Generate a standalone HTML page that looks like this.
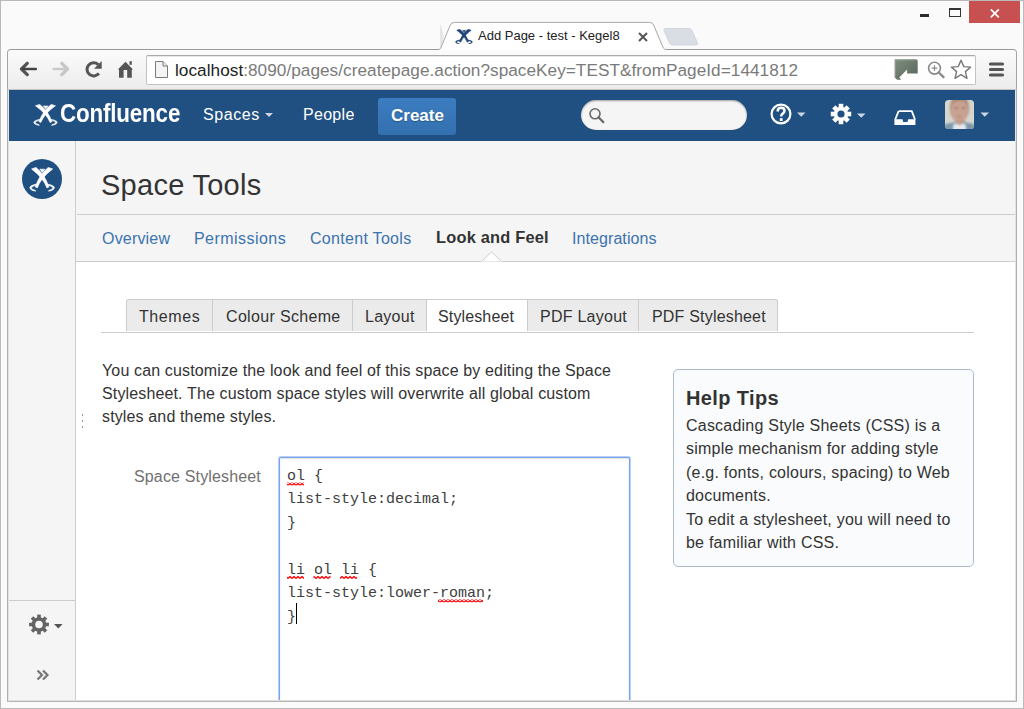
<!DOCTYPE html>
<html><head><meta charset="utf-8">
<style>
*{margin:0;padding:0;box-sizing:border-box}
html,body{width:1024px;height:709px;overflow:hidden;background:#fafafa;font-family:"Liberation Sans",sans-serif;position:relative}
.a{position:absolute}
.t{position:absolute;white-space:nowrap;line-height:1}
#frame{left:0;top:0;width:1024px;height:709px;border:1px solid #bababa;background:#fafafa}
#toolbar{left:7px;top:49px;width:1010px;height:41px;border:1px solid #a5a5a5;border-top-color:#999;border-bottom:none;border-radius:4px 4px 0 0;background:linear-gradient(#fbfbfb,#ececec)}
#omni{left:146px;top:55px;width:830px;height:30px;background:#fff;border:1px solid #c2c2c2;border-top-color:#a9a9a9;border-radius:2px;box-shadow:inset 0 1px 0 #e8e8e8}
#content{left:7px;top:89px;width:1010px;height:613px;border:1px solid #b0b0b0;border-top-color:#c4c4c4;border-bottom-color:#b5b5b5;background:#fff;overflow:hidden}
#hdr{left:9px;top:90px;width:1006px;height:51px;background:#205081}
#side{left:9px;top:141px;width:67px;height:560px;background:#f5f5f5;border-right:1px solid #ccc}
#spacehdr{left:76px;top:141px;width:939px;height:121px;background:#f5f5f5;border-bottom:1px solid #ccc}
</style></head><body>
<div id="frame" class="a"></div>
<div id="toolbar" class="a"></div>
<div id="omni" class="a"></div>
<div id="content" class="a"></div>
<div id="hdr" class="a"></div>
<div class="a" style="left:8px;top:90px;width:1px;height:611px;background:#e4e4e4"></div>
<div class="a" style="left:1015px;top:90px;width:1px;height:611px;background:#e4e4e4"></div>
<div id="side" class="a"></div>
<div id="spacehdr" class="a"></div>



<!-- window controls -->
<div class="a" style="left:969px;top:1px;width:51px;height:22px;background:#c75050"></div>
<svg class="a" style="left:969px;top:1px" width="51" height="22"><path d="M21.8 8.4 L29.8 16.4 M29.8 8.4 L21.8 16.4" stroke="#fff" stroke-width="1.7"/></svg>
<div class="a" style="left:920px;top:14px;width:9px;height:3px;background:#2b2b2b"></div>
<div class="a" style="left:949px;top:8px;width:12px;height:9px;border:1px solid #333;border-top-width:2px;background:transparent"></div>

<!-- tab -->
<svg class="a" style="left:430px;top:18px" width="280" height="34" viewBox="0 0 280 34">
<defs><linearGradient id="gw" x1="0" y1="0" x2="1" y2="0"><stop offset="0" stop-color="#d2d6dc"/><stop offset="1" stop-color="#eef0f3"/></linearGradient></defs>
<path d="M10.3 7 L11 7 L14 20 L11 29.5 L10.3 29.5 Z" fill="url(#gw)" opacity="0.8"/>
<path d="M8.5 32 L10.8 30 L20.2 7.2 Q21.3 4.4 24.5 4.4 L219.5 4.4 Q222.5 4.4 223.6 7 L233.3 30 L236.5 32 Z" fill="#fff"/>
<path d="M8 31.5 Q10 31.5 10.8 30 L20.2 7.2 Q21.3 4.4 24.5 4.4 L219.5 4.4 Q222.5 4.4 223.6 7 L233.3 30 Q234 31.5 236.5 31.5" fill="none" stroke="#a8a8a8" stroke-width="1"/>
<path d="M234 12.5 Q233.5 10.5 235.5 10.5 L259 10.5 Q261 10.5 262 12.5 L267.5 25 Q268 27 266 27 L242.5 27 Q240.5 27 239.5 25 Z" fill="#d9dde4" stroke="#d2d6dc" stroke-width="1"/>
</svg>
<svg class="a" style="left:455px;top:28.7px" width="18" height="15.6" viewBox="180 200 345 325" preserveAspectRatio="none"><g fill="#1d4475" stroke="#1d4475" stroke-width="6"><path d="M214 226 L272 206 Q390 300 440 462 L416 474 Q370 345 214 226 Z" stroke="#1d4475" stroke-width="12" stroke-linejoin="round"/>
<path d="M490 226 L432 206 Q314 300 264 462 L288 474 Q334 345 490 226 Z" stroke="#1d4475" stroke-width="12" stroke-linejoin="round"/>
<path d="M322 228 L388 228 L355 272 Z"/>
<path d="M300 420 Q180 440 190 478 Q205 510 268 518 L262 504 Q215 495 212 475 Q215 452 300 434 Z"/>
<path d="M404 420 Q524 440 514 478 Q499 510 436 518 L442 504 Q489 495 492 475 Q489 452 404 434 Z"/></g></svg>
<div class="t" style="left:478px;top:29px;font-size:13px;color:#222">Add Page - test - Kegel8</div>
<svg class="a" style="left:638px;top:32px" width="10" height="10"><path d="M1 1 L9 9 M9 1 L1 9" stroke="#555" stroke-width="2"/></svg>

<!-- toolbar icons -->
<svg class="a" style="left:19px;top:61px" width="20" height="18" viewBox="0 0 20 18">
<path d="M8.2 2.3 L2.5 8 L8.2 13.7" stroke="#555" stroke-width="3.3" fill="none" stroke-linecap="round" stroke-linejoin="round"/>
<path d="M4 8 L16.8 8" stroke="#444" stroke-width="2.6" stroke-linecap="round"/>
</svg>
<svg class="a" style="left:51px;top:61px" width="20" height="18" viewBox="0 0 20 18">
<path d="M10.8 2.3 L16.5 8 L10.8 13.7" stroke="#c6c6c6" stroke-width="3.3" fill="none" stroke-linecap="round" stroke-linejoin="round"/>
<path d="M2.7 8 L15 8" stroke="#c9c9c9" stroke-width="2.6" stroke-linecap="round"/>
</svg>
<svg class="a" style="left:84px;top:60px" width="19" height="19" viewBox="0 0 19 19">
<path d="M14.2 4.6 A6.6 6.6 0 1 0 14.9 13.3" stroke="#555" stroke-width="3" fill="none"/>
<path d="M10 8.7 L17.7 8.7 L17.7 1 Z" fill="#555"/>
</svg>
<svg class="a" style="left:117px;top:60px" width="17" height="19" viewBox="0 0 17 19">
<path d="M8.5 1.8 L16 9.5 L14.8 9.5 L14.8 17.8 L10.2 17.8 L10.2 10 L6.6 10 L6.6 17.8 L2 17.8 L2 9.5 L0.8 9.5 Z" fill="#555"/>
<rect x="12.5" y="1.2" width="2.3" height="3.6" fill="#555"/>
</svg>
<svg class="a" style="left:154px;top:60px" width="15" height="19" viewBox="0 0 15 19">
<path d="M1.5 1.5 L9 1.5 L13.5 6 L13.5 17.5 L1.5 17.5 Z" fill="#f4f4f4" stroke="#7a7a7a" stroke-width="1"/>
<path d="M9 1.5 L9 6 L13.5 6" fill="#e8e8e8" stroke="#7a7a7a" stroke-width="1"/>
</svg>
<div class="t" style="left:175px;top:61.7px;font-size:17.2px;letter-spacing:0.04px;color:#7a7a7a"><span style="color:#222">localhost</span>:8090/pages/createpage.action?spaceKey=TEST&amp;fromPageId=1441812</div>
<svg class="a" style="left:894px;top:59px" width="25" height="22" viewBox="0 0 25 22">
<defs><linearGradient id="gg" x1="0" y1="0" x2="1" y2="1"><stop offset="0" stop-color="#7f8e7f"/><stop offset="1" stop-color="#56655a"/></linearGradient></defs>
<path d="M0.7 0.2 L21.7 0.2 Q23.7 0.2 23.7 2.2 L23.7 14.6 L13.1 14.6 L13.1 10.6 L5.3 18.6 L7.3 20.8 L3.2 20.8 L0.7 18.4 Z" fill="url(#gg)"/>
<path d="M1.2 0.8 L21.5 0.8 M1.2 0.8 L1.2 18" stroke="#a3aea3" stroke-width="1.2" opacity="0.6"/>
</svg>
<svg class="a" style="left:927px;top:61px" width="19" height="18" viewBox="0 0 19 18">
<circle cx="7.5" cy="7.2" r="5.9" stroke="#8a8a8a" stroke-width="1.6" fill="#fff"/>
<path d="M11.8 11.5 L16.5 16.2" stroke="#8a8a8a" stroke-width="2.4" stroke-linecap="round"/>
<path d="M7.5 4.3 L7.5 10.1 M4.6 7.2 L10.4 7.2" stroke="#8a8a8a" stroke-width="1.2"/>
</svg>
<svg class="a" style="left:950px;top:59px" width="22" height="21" viewBox="0 0 22 21">
<path d="M11 1.2 L13.8 7.6 L20.6 8.1 L15.4 12.6 L17 19.3 L11 15.7 L5 19.3 L6.6 12.6 L1.4 8.1 L8.2 7.6 Z" fill="#fff" stroke="#777" stroke-width="1.4" stroke-linejoin="round"/>
</svg>
<svg class="a" style="left:988px;top:61px" width="17" height="18" viewBox="0 0 17 18">
<path d="M2.5 3 L14.5 3 M2.5 8.5 L14.5 8.5 M2.5 14 L14.5 14" stroke="#555" stroke-width="3.2" stroke-linecap="round"/>
</svg>

<!-- confluence header -->
<svg class="a" style="left:33px;top:104px" width="25" height="22" viewBox="180 200 345 325" preserveAspectRatio="none"><g fill="#fff" stroke="#fff" stroke-width="7"><path d="M214 226 L272 206 Q390 300 440 462 L416 474 Q370 345 214 226 Z" stroke="#fff" stroke-width="9" stroke-linejoin="round"/>
<path d="M490 226 L432 206 Q314 300 264 462 L288 474 Q334 345 490 226 Z" stroke="#fff" stroke-width="9" stroke-linejoin="round"/>
<path d="M322 228 L388 228 L355 272 Z"/>
<path d="M300 420 Q180 440 190 478 Q205 510 268 518 L262 504 Q215 495 212 475 Q215 452 300 434 Z"/>
<path d="M404 420 Q524 440 514 478 Q499 510 436 518 L442 504 Q489 495 492 475 Q489 452 404 434 Z"/></g></svg>
<div class="t" style="left:60px;top:101px;font-size:25px;font-weight:bold;color:#fff;transform:scaleX(0.896);transform-origin:0 0;letter-spacing:-0.2px">Confluence</div>
<div class="t" style="left:203px;top:107px;font-size:16px;color:#fff;letter-spacing:0.6px">Spaces</div>
<svg class="a" style="left:265px;top:113px" width="9" height="5"><path d="M0 0 L8 0 L4 4 Z" fill="#ccd6e3"/></svg>
<div class="t" style="left:303px;top:107px;font-size:16px;color:#fff;letter-spacing:0.3px">People</div>
<div class="a" style="left:378px;top:98px;width:78px;height:37px;background:linear-gradient(#3b7cc0,#3370af);border-radius:3px"></div>
<div class="t" style="left:391px;top:106.5px;font-size:17px;font-weight:bold;color:#fff;text-shadow:0 1px 1px rgba(0,0,0,.25)">Create</div>
<div class="a" style="left:581px;top:100px;width:166px;height:29.5px;background:#f5f5f5;border-radius:15px;box-shadow:inset 0 1px 2px rgba(0,0,0,.35)"></div>
<svg class="a" style="left:588px;top:107px" width="18" height="17"><circle cx="7" cy="6.8" r="5" stroke="#6a6a6a" stroke-width="1.6" fill="none"/><path d="M10.5 10.3 L15.3 15.1" stroke="#6a6a6a" stroke-width="2.2" stroke-linecap="round"/></svg>
<svg class="a" style="left:769px;top:102px" width="40" height="24">
<circle cx="12" cy="12" r="9.4" stroke="#fff" stroke-width="2.2" fill="none"/>
<path d="M8.7 9.4 Q8.7 5.8 12.1 5.8 Q15.5 5.8 15.5 8.8 Q15.5 10.7 13.5 11.8 Q12.2 12.6 12.2 14.5" stroke="#fff" stroke-width="2.5" fill="none"/>
<rect x="10.8" y="16.2" width="2.8" height="2.8" fill="#fff"/>
<path d="M28 10.6 L36.5 10.6 L32.25 14.8 Z" fill="#ccd6e3"/>
</svg>
<svg class="a" style="left:830px;top:103px" width="40" height="22">
<g transform="translate(11,11)" fill="#fff">
<circle r="7.2"/>
<rect x="-2.3" y="-10.2" width="4.6" height="20.4"/>
<rect x="-2.3" y="-10.2" width="4.6" height="20.4" transform="rotate(45)"/>
<rect x="-2.3" y="-10.2" width="4.6" height="20.4" transform="rotate(90)"/>
<rect x="-2.3" y="-10.2" width="4.6" height="20.4" transform="rotate(135)"/>
<circle r="3.6" fill="#205081"/>
</g>
<path d="M27 10.6 L35.5 10.6 L31.25 14.8 Z" fill="#ccd6e3"/>
</svg>
<svg class="a" style="left:893px;top:109px" width="24" height="17" viewBox="0 0 24 17">
<path d="M5.6 2.1 L18.8 2.1 L22 10.5" fill="none" stroke="#fff" stroke-width="1.8"/>
<path d="M5.6 2.1 L2.2 10.5" fill="none" stroke="#fff" stroke-width="1.8"/>
<path d="M1.4 10.3 L9.5 10.3 L10.2 13 L14.5 13 L15.2 10.3 L22.4 10.3 L22.4 16 L1.4 16 Z" fill="#fff"/>
</svg>
<div class="a" style="left:945px;top:100px;width:29px;height:29px;border-radius:3.5px;overflow:hidden;background:#d6d6ce">
<div class="a" style="left:0;top:0;width:29px;height:29px;filter:blur(1px)">
<div class="a" style="left:5px;top:-4px;width:19px;height:25px;border-radius:45%;background:#a98a78"></div>
<div class="a" style="left:6px;top:1px;width:17px;height:21px;border-radius:40% 40% 48% 48%;background:#c9a291"></div>
<div class="a" style="left:9.5px;top:20px;width:10px;height:6px;background:#c29a88"></div>
<div class="a" style="left:10px;top:7px;width:3px;height:1.5px;background:#9e7a70"></div>
<div class="a" style="left:17px;top:7px;width:3px;height:1.5px;background:#9e7a70"></div>
<div class="a" style="left:12px;top:15.5px;width:5px;height:1.5px;background:#b77f78"></div>
<div class="a" style="left:-3px;top:22px;width:35px;height:12px;border-radius:50% 50% 0 0;background:#7f98aa"></div>
<div class="a" style="left:8px;top:23px;width:13px;height:8px;background:#e6eaf0;border-radius:40% 40% 0 0"></div>
<div class="a" style="left:12px;top:22px;width:5px;height:3px;background:#c29a88;border-radius:0 0 50% 50%"></div>
</div>
</div>
<svg class="a" style="left:980px;top:112px" width="10" height="6"><path d="M0.5 0.5 L9 0.5 L4.75 4.8 Z" fill="#ccd6e3"/></svg>


<!-- sidebar -->
<div class="a" style="left:22px;top:159px;width:40px;height:40px;border-radius:50%;background:#205081"></div>
<svg class="a" style="left:28.7px;top:167.2px" width="26.3" height="24.8" viewBox="180 200 345 325" preserveAspectRatio="none"><g fill="#fff" stroke="#fff" stroke-width="7"><path d="M214 226 L272 206 Q390 300 440 462 L416 474 Q370 345 214 226 Z" stroke="#fff" stroke-width="9" stroke-linejoin="round"/>
<path d="M490 226 L432 206 Q314 300 264 462 L288 474 Q334 345 490 226 Z" stroke="#fff" stroke-width="9" stroke-linejoin="round"/>
<path d="M322 228 L388 228 L355 272 Z"/>
<path d="M300 420 Q180 440 190 478 Q205 510 268 518 L262 504 Q215 495 212 475 Q215 452 300 434 Z"/>
<path d="M404 420 Q524 440 514 478 Q499 510 436 518 L442 504 Q489 495 492 475 Q489 452 404 434 Z"/></g></svg>
<div class="a" style="left:9px;top:600px;width:66px;height:1px;background:#ccc"></div>
<svg class="a" style="left:28px;top:613px" width="40" height="22">
<g transform="translate(11,11.5)" fill="#646464">
<circle r="7.3"/>
<rect x="-1.8" y="-9.9" width="3.6" height="19.8"/>
<rect x="-1.8" y="-9.9" width="3.6" height="19.8" transform="rotate(45)"/>
<rect x="-1.8" y="-9.9" width="3.6" height="19.8" transform="rotate(90)"/>
<rect x="-1.8" y="-9.9" width="3.6" height="19.8" transform="rotate(135)"/>
<circle r="3.8" fill="#f5f5f5"/>
</g>
<path d="M26 11 L34.6 11 L30.3 15.4 Z" fill="#555"/>
</svg>
<svg class="a" style="left:36px;top:669px" width="14" height="12"><path d="M1.5 1.5 L6 6 L1.5 10.5 M7 1.5 L11.5 6 L7 10.5" stroke="#777" stroke-width="2.2" fill="none"/></svg>
<div class="a" style="left:81.5px;top:414px;width:1.5px;height:1.5px;background:#999"></div>
<div class="a" style="left:81.5px;top:420px;width:1.5px;height:1.5px;background:#999"></div>
<div class="a" style="left:81.5px;top:426px;width:1.5px;height:1.5px;background:#999"></div>

<!-- space header -->
<div class="a" style="left:77px;top:214px;width:938px;height:1px;background:#ccc"></div>
<div class="t" style="left:101px;top:171px;font-size:29px;letter-spacing:0.27px;color:#333">Space Tools</div>
<div class="t" style="left:102px;top:231px;font-size:16px;letter-spacing:0.18px;color:#3b73af">Overview</div>
<div class="t" style="left:194px;top:231px;font-size:16px;letter-spacing:0.45px;color:#3b73af">Permissions</div>
<div class="t" style="left:310px;top:231px;font-size:16px;letter-spacing:0.3px;color:#3b73af">Content Tools</div>
<div class="t" style="left:436px;top:229px;font-size:16.4px;letter-spacing:0.2px;font-weight:bold;color:#333">Look and Feel</div>
<div class="t" style="left:572px;top:231px;font-size:16px;letter-spacing:0.08px;color:#3b73af">Integrations</div>
<svg class="a" style="left:481px;top:251px" width="21" height="12"><path d="M0.5 10.5 L10.5 1 L20.5 10.5 Z" fill="#fff" stroke="#ccc" stroke-width="1"/><rect x="0" y="10.5" width="21" height="2" fill="#fff"/></svg>

<!-- tabs -->
<div class="a" style="left:101px;top:332px;width:873px;height:1px;background:#ccc"></div>
<div class="a" style="left:126px;top:299px;width:652px;height:32px;background:#ebebeb;border:1px solid #ccc;border-bottom:none;border-radius:3px 3px 0 0"></div>
<div class="a" style="left:426px;top:300px;width:101px;height:32px;background:#fff"></div>
<div class="a" style="left:212px;top:300px;width:1px;height:31px;background:#ccc"></div>
<div class="a" style="left:352px;top:300px;width:1px;height:31px;background:#ccc"></div>
<div class="a" style="left:426px;top:300px;width:1px;height:31px;background:#ccc"></div>
<div class="a" style="left:527px;top:300px;width:1px;height:31px;background:#ccc"></div>
<div class="a" style="left:638px;top:300px;width:1px;height:31px;background:#ccc"></div>
<div class="t" style="left:139px;top:309px;font-size:16px;letter-spacing:0.6px;color:#333">Themes</div>
<div class="t" style="left:226px;top:309px;font-size:16px;letter-spacing:0.33px;color:#333">Colour Scheme</div>
<div class="t" style="left:365px;top:309px;font-size:16px;letter-spacing:0.26px;color:#333">Layout</div>
<div class="t" style="left:438px;top:309px;font-size:16px;letter-spacing:0.13px;color:#333">Stylesheet</div>
<div class="t" style="left:540px;top:309px;font-size:16px;letter-spacing:0.25px;color:#333">PDF Layout</div>
<div class="t" style="left:652px;top:309px;font-size:16px;letter-spacing:0.19px;color:#333">PDF Stylesheet</div>

<!-- paragraph -->
<div class="a" style="left:102px;top:359px;width:540px;font-size:16px;line-height:23px;letter-spacing:0.14px;color:#333;white-space:nowrap">You can customize the look and feel of this space by editing the Space<br>Stylesheet. The custom space styles will overwrite all global custom<br>styles and theme styles.</div>



<!-- help box -->
<div class="a" style="left:673px;top:369px;width:301px;height:198px;border:1px solid #aebacb;border-radius:5px;background:#fafbfc"></div>
<div class="t" style="left:686px;top:388px;font-size:20px;letter-spacing:0.37px;font-weight:bold;color:#333">Help Tips</div>
<div class="a" style="left:686px;top:414px;width:290px;font-size:16px;line-height:23.4px;letter-spacing:0.22px;white-space:nowrap;color:#333">Cascading Style Sheets (CSS) is a<br>simple mechanism for adding style<br>(e.g. fonts, colours, spacing) to Web<br>documents.<br>To edit a stylesheet, you will need to<br>be familiar with CSS.</div>

<!-- form -->
<div class="t" style="left:134px;top:469px;font-size:16px;letter-spacing:0.15px;color:#707070">Space Stylesheet</div>
<div class="a" style="left:279px;top:457px;width:351px;height:243px;clip-path:inset(-3px -3px 0 -3px);border:1px solid #77a3ec;border-bottom:none;border-radius:2px 2px 0 0;background:#fff;box-shadow:0 0 0 1px rgba(130,170,240,.55),inset 0 1px 2px rgba(0,0,0,.12)"></div>
<div class="a" style="left:287px;top:465px;font-family:'Liberation Mono',monospace;font-size:15px;line-height:23.45px;color:#404040;white-space:pre">ol {
list-style:decimal;
}

li ol li {
list-style:lower-roman;
}</div>

<svg class="a" style="left:0;top:0" width="1024" height="709">
<defs><pattern id="sq" width="4" height="3" patternUnits="userSpaceOnUse"><path d="M0 2.5 L2 0.5 L4 2.5" stroke="#f00" stroke-width="1.3" fill="none"/></pattern></defs>
<rect x="287" y="482.5" width="17" height="3" fill="url(#sq)"/>
<rect x="287" y="576" width="17" height="3" fill="url(#sq)"/>
<rect x="313.5" y="576" width="17" height="3" fill="url(#sq)"/>
<rect x="340" y="576" width="17" height="3" fill="url(#sq)"/>
<rect x="438" y="599.3" width="45" height="3" fill="url(#sq)"/>
</svg>
<div class="a" style="left:296px;top:603px;width:1px;height:21px;background:#000"></div>
<div class="a" style="left:9px;top:700px;width:1007px;height:1px;background:#dedede"></div>
</body></html>
